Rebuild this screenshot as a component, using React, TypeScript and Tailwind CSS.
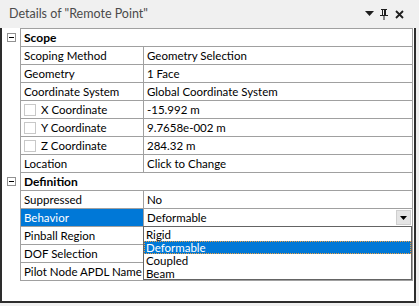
import React from 'react';

type Row =
  | { kind: 'group'; label: string }
  | { kind: 'prop'; label: string; value: string; check?: boolean; selected?: boolean; combo?: boolean };

const rows: Row[] = [
  { kind: 'group', label: 'Scope' },
  { kind: 'prop', label: 'Scoping Method', value: 'Geometry Selection' },
  { kind: 'prop', label: 'Geometry', value: '1 Face' },
  { kind: 'prop', label: 'Coordinate System', value: 'Global Coordinate System' },
  { kind: 'prop', label: 'X Coordinate', value: '-15.992 m', check: true },
  { kind: 'prop', label: 'Y Coordinate', value: '9.7658e-002 m', check: true },
  { kind: 'prop', label: 'Z Coordinate', value: '284.32 m', check: true },
  { kind: 'prop', label: 'Location', value: 'Click to Change' },
  { kind: 'group', label: 'Definition' },
  { kind: 'prop', label: 'Suppressed', value: 'No' },
  { kind: 'prop', label: 'Behavior', value: 'Deformable', selected: true, combo: true },
  { kind: 'prop', label: 'Pinball Region', value: '' },
  { kind: 'prop', label: 'DOF Selection', value: '' },
  { kind: 'prop', label: 'Pilot Node APDL Name', value: '' },
];

const options = ['Rigid', 'Deformable', 'Coupled', 'Beam'];

function CollapseBox() {
  return (
    <div className="w-[9px] h-[9px] border border-[#919191] bg-white flex items-center justify-center">
      <div className="w-[5px] h-px bg-black" />
    </div>
  );
}

export default function App() {
  return (
    <div
      className="w-[419px] h-[306px] bg-[#f0f0f0] flex flex-col text-[11.5px] leading-none text-black"
      style={{ fontFamily: '"Segoe UI", Lato, "Noto Sans", sans-serif' }}
    >
      {/* title bar */}
      <div className="h-[28px] flex items-center pl-[9px] pr-[15px]">
        <span className="text-[#4a4a4a] text-[12.5px] whitespace-nowrap">Details of "Remote Point"</span>
        <div className="flex-1 ml-[4px] mr-[5px] h-[4px] bg-[radial-gradient(circle,#c4c4c4_0.6px,transparent_0.7px)] bg-[length:2px_2px]" />
        <svg width="9" height="6" viewBox="0 0 9 6" className="mr-[6px]">
          <path d="M0 0h9L4.5 5z" fill="#1e1e1e" />
        </svg>
        <svg width="8" height="11" viewBox="0 0 8 11" className="mr-[7px]">
          <path d="M1 0h6v1H6v5h2v1H4.5v4h-1V7H0V6h2V1H1z M3 1v5h1V1z" fill="#1e1e1e" />
        </svg>
        <svg width="9" height="9" viewBox="0 0 9 9">
          <path d="M1 1l7 7M8 1L1 8" stroke="#1e1e1e" strokeWidth="1.8" />
        </svg>
      </div>

      {/* panel */}
      <div className="flex-1 mr-[3px] mb-[3px] border-l-2 border-r-2 border-b-2 border-[#2d2d2d] bg-white flex">
        <div className="flex flex-col">
          {rows.map((r, i) => (
            <div key={i} className="h-[18px] w-[18px] flex items-center justify-center pl-px">
              {r.kind === 'group' && <CollapseBox />}
            </div>
          ))}
        </div>
        <div className="relative w-[393px] self-start border-b border-[#a0a0a0]">
          {rows.map((r, i) =>
            r.kind === 'group' ? (
              <div
                key={i}
                className="h-[18px] border-t border-x border-[#a0a0a0] flex items-center pl-[3px] font-bold text-[12px]"
              >
                {r.label}
              </div>
            ) : (
              <div key={i} className="h-[18px] border-t border-x border-[#a0a0a0] flex">
                <div
                  className={`w-[122px] flex items-center pl-[3px] whitespace-nowrap overflow-hidden ${
                    r.selected ? 'bg-[#0078d7] text-white' : ''
                  }`}
                >
                  {r.check && <div className="w-[12px] h-[12px] border border-[#c8c8c8] mr-[5px] shrink-0" />}
                  {r.label}
                </div>
                <div className="flex-1 border-l border-[#a0a0a0] flex items-center pl-[3px] whitespace-nowrap">
                  {r.combo ? (
                    <div className="flex-1 h-full flex items-center">
                      <span className="flex-1">{r.value}</span>
                      <div className="w-[15px] h-[15px] mr-px bg-[#e5e5e5] border border-[#cfcfcf] flex items-center justify-center">
                        <svg width="7" height="4" viewBox="0 0 7 4">
                          <path d="M0 0h7L3.5 4z" fill="#000" />
                        </svg>
                      </div>
                    </div>
                  ) : (
                    r.value
                  )}
                </div>
              </div>
            )
          )}

          {/* dropdown list */}
          <div className="absolute left-[123px] top-[198px] w-[269px] h-[54px] bg-white border border-[#646464] pt-px leading-[13px]">
            {options.map((o) => (
              <div
                key={o}
                className={`h-[13px] pl-[2px] overflow-hidden ${
                  o === 'Deformable'
                    ? 'bg-[#0078d7] text-white outline outline-1 outline-dotted outline-[#f0a040] -outline-offset-1'
                    : ''
                }`}
              >
                {o}
              </div>
            ))}
          </div>
        </div>
      </div>
    </div>
  );
}
